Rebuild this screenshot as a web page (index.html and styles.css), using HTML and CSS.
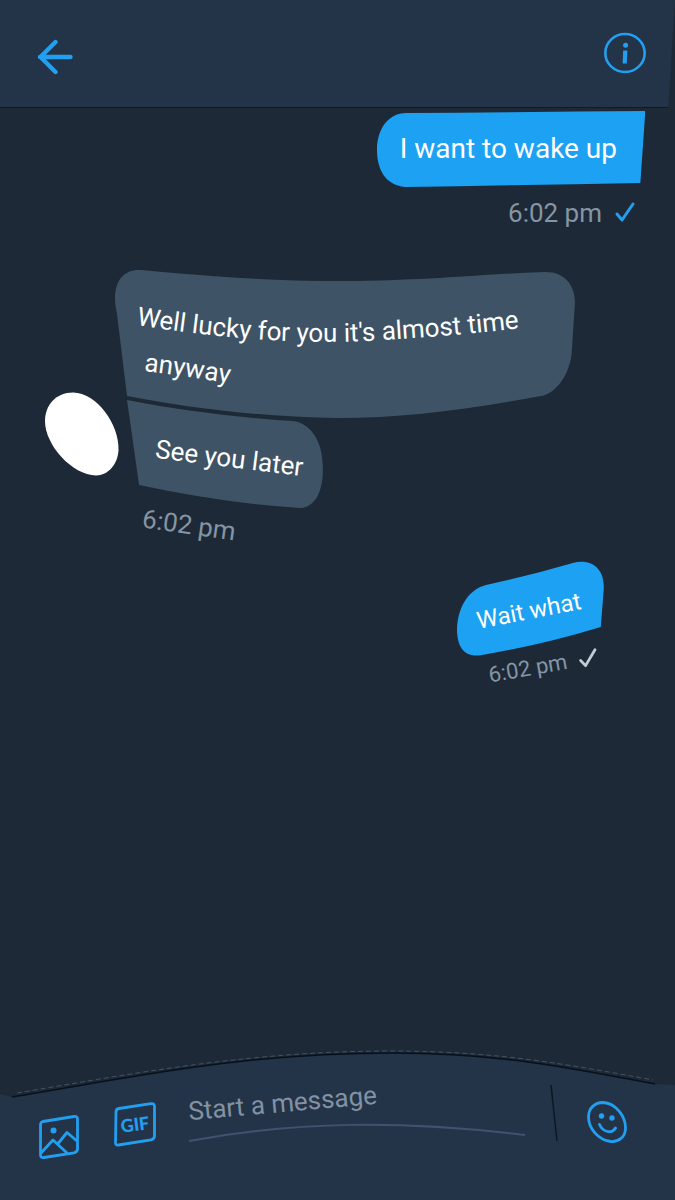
FILE: index.html
```html
<!DOCTYPE html>
<html lang="en">
<head>
<meta charset="utf-8">
<meta name="viewport" content="width=device-width, initial-scale=1">
<title>Messages</title>
<link rel="stylesheet" href="styles.css">
</head>
<body>
<header class="topbar">
  <button class="icon-button" type="button" aria-label="Back">
    <svg class="icon" width="36" height="36" viewBox="0 0 36 36"><path d="M33.500 18H3M18.500 3 3.500 18l15 15" stroke-width="4.400"/></svg>
  </button>
  <button class="icon-button" type="button" aria-label="Conversation info">
    <svg class="icon" width="42" height="42" viewBox="0 0 42 42"><ellipse cx="21" cy="21" rx="19.700" ry="19" stroke-width="2.600"/><circle class="dot" cx="21.600" cy="13.300" r="2.500"/><path d="M21.300 18.500 20.700 31.500" stroke-width="4.200" stroke-linecap="butt"/></svg>
  </button>
</header>

<main class="thread">
  <section class="sent sent-first">
    <div class="bubble bubble-wake">
      <svg class="shape blue" viewBox="0 0 268 76" preserveAspectRatio="none"><path d="M29 2Q150 1 268 0L263 72Q150 74 28 76C8 74 0 58 0 39C0 17 12 2 29 2Z"/></svg>
      <p class="text text-large">I want to wake up</p>
    </div>
    <div class="meta">
      <time class="time">6:02 pm</time>
      <svg class="check blue-line" width="24" height="24" viewBox="0 0 24 24"><path d="M4 13 9 19 20 3" stroke-width="3"/></svg>
    </div>
  </section>

  <section class="received">
    <svg class="avatar" width="74" height="84" viewBox="0 0 74 84"><path d="M28 .5C52 1 74 32 73.500 58C73 72 63 83.500 51 83.500C27 83 0 53 0 29C0 13 11 .5 28 .5Z"/></svg>
    <div class="group">
      <div class="bubble bubble-lucky">
        <svg class="shape slate" viewBox="0 0 460 149" preserveAspectRatio="none"><path d="M0 30C0 10 10 0 26 1C90 7 165 13 240 12C320 11 370 5 429 3C448 2 460 15 460 33L457 80C456 106 440 125 426 127C350 141 290 149 222 149C145 148 75 139 12 127L2 45Q0 36 0 30Z"/></svg>
        <svg class="curved" viewBox="0 0 410 100" width="410" height="100">
          <defs>
            <path id="line-one" d="M1 36C90 50 165 55 230 52C290 49 345 44 405 37"/>
            <path id="line-two" d="M9 82Q60 88 140 102"/>
          </defs>
          <text><textPath href="#line-one">Well lucky for you it's almost time</textPath></text>
          <text><textPath href="#line-two">anyway</textPath></text>
        </svg>
      </div>
      <div class="bubble bubble-later">
        <svg class="shape slate" viewBox="0 0 195 108" preserveAspectRatio="none"><path d="M0 0Q75 15 165 21C184 23 195 43 195 66C196 90 188 107 173 108Q95 103 12 85Z"/></svg>
        <p class="text text-medium">See you later</p>
      </div>
      <time class="time time-left">6:02 pm</time>
    </div>
  </section>

  <section class="sent sent-last">
    <div class="bubble bubble-what">
      <svg class="shape blue" viewBox="0 0 148 95" preserveAspectRatio="none"><path d="M29 24Q75 14 116 2C136-3 148 9 147 28L144 66Q85 84 25 94C8 97 0 87 0 68C1 44 13 28 29 24Z"/></svg>
      <p class="text text-small">Wait what</p>
    </div>
    <div class="meta meta-last">
      <time class="time time-small">6:02 pm</time>
      <svg class="check pale-line" width="20" height="24" viewBox="0 0 20 24"><path d="M2 13 6 19 18 5" stroke-width="2.800"/></svg>
    </div>
  </section>
</main>

<form class="composer">
  <svg class="backdrop" viewBox="0 0 675 150" preserveAspectRatio="none">
    <path class="panel" d="M0 44 12 47C130 28 240 3 393 3C500 3 570 18 655 34L675 35V150H0Z"/>
    <path class="edge" d="M12 47C130 28 240 3 393 3C500 3 570 18 655 34"/>
    <path class="dashes" d="M17 43C130 24 250 1 390 1C500 1 570 15 653 30"/>
  </svg>
  <button class="icon-button photo" type="button" aria-label="Add photo">
    <svg class="icon" width="40" height="44" viewBox="0 0 40 44"><path d="M4 6.500 35 1.500Q38.500 1 38.500 4V34Q38.500 37 35 37.800L5 42.500Q1.500 43 1.500 40V10Q1.500 7 4 6.500ZM2 38 14 25 28 38M19.500 28 28 17.500 38 26" stroke-width="2.800"/><circle class="dot" cx="14.500" cy="15.500" r="3"/></svg>
  </button>
  <button class="icon-button gif" type="button" aria-label="Add GIF">
    <svg class="icon" width="42" height="45" viewBox="0 0 42 45"><path d="M5 6.500 37 1.700Q40.500 1.300 40.500 4.500V34Q40.500 37 37 37.800L4.500 43Q1.500 43.500 1.500 40.500L2 10Q2 7 5 6.500Z" stroke-width="2.800"/><text class="gif-text" x="21" y="29" text-anchor="middle" transform="rotate(-7 21 23)">GIF</text></svg>
  </button>
  <div class="field">
    <input class="entry" type="text" placeholder="Start a message" aria-label="Start a message">
    <svg class="underline" viewBox="0 0 340 20" preserveAspectRatio="none"><path d="M1 18C110-2 215-3 339 12"/></svg>
  </div>
  <svg class="divider" width="8" height="56" viewBox="0 0 8 56"><path d="M1 0 7 56"/></svg>
  <button class="icon-button smile" type="button" aria-label="Add emoji">
    <svg class="icon" width="40" height="42" viewBox="0 0 40 42"><path d="M16 1.500C29 2 39 16 38.500 28C38 36 32 41 24 40.500C11 39 1.500 27 1.500 16C1.500 7 8 1.500 16 1.500ZM12.500 23.500C16 31.500 25 33 28.500 27" stroke-width="2.800"/><circle class="dot" cx="14.500" cy="15" r="2.700"/><circle class="dot" cx="25" cy="17" r="2.700"/></svg>
  </button>
</form>
</body>
</html>
```
FILE: styles.css
```css
* { box-sizing: border-box; }

body {
  margin: 0;
  min-height: 100vh;
  display: flex;
  flex-direction: column;
  background: #1d2936;
  color: #fff;
  font-family: Roboto, "Liberation Sans", sans-serif;
  overflow-x: hidden;
}

svg { display: block; flex: none; }
p { margin: 0; }

.icon-button {
  padding: 0;
  border: 0;
  background: none;
  flex: none;
  position: relative;
  cursor: pointer;
}

.icon {
  fill: none;
  stroke: #229ff0;
  stroke-linecap: round;
  stroke-linejoin: round;
}

.dot { fill: #229ff0; stroke: none; }

.topbar {
  display: flex;
  justify-content: space-between;
  align-items: flex-start;
  padding: 32px 29px 32px 37px;
  background: #243448;
  border-bottom: 1px solid #111a24;
  clip-path: polygon(0 0, 100% 0, 99% 100%, 0 100%);
}

.topbar .icon-button:first-child { margin-top: 7px; }

.thread { flex: 1; }

.sent {
  display: flex;
  flex-direction: column;
  align-items: flex-end;
}

.sent-first { padding: 3px 30px 0 0; }
.sent-last { padding: 20px 70px 0 0; }

.bubble { position: relative; }

.shape {
  position: absolute;
  inset: 0;
  width: 100%;
  height: 100%;
}

.blue { fill: #1da1f2; }
.slate { fill: #3e5366; }

.text {
  position: relative;
  white-space: nowrap;
}

.bubble-wake { padding: 20px 28px 20px 23px; }

.text-large { font-size: 28px; line-height: 36px; }
.text-medium { font-size: 26px; line-height: 32px; transform: rotate(7deg); }
.text-small { font-size: 24px; line-height: 32px; transform: rotate(-11deg); }

.meta {
  display: flex;
  align-items: center;
  gap: 11px;
  margin: 10px 8px 0 0;
}

.time {
  color: #8595a3;
  font-size: 26px;
  line-height: 32px;
}

.check {
  fill: none;
  stroke-linecap: round;
  stroke-linejoin: round;
}

.blue-line { stroke: #229ff0; }
.pale-line { stroke: #c3ccd4; }

.received {
  display: flex;
  align-items: flex-start;
  padding: 40px 100px 0 45px;
}

.avatar {
  margin: 123px -4px 0 0;
  fill: #fff;
}

.group {
  flex: 1;
  display: flex;
  flex-direction: column;
  align-items: flex-start;
}

.bubble-lucky {
  width: 100%;
  padding: 20px 0 29px 20px;
}

.curved {
  position: relative;
  fill: #fff;
  font-size: 26px;
  overflow: visible;
}

.bubble-later {
  margin: -18px 0 0 12px;
  padding: 42px 19px 34px 28px;
}

.time-left {
  margin: 1px 0 0 27px;
  transform: rotate(8deg);
}

.bubble-what { padding: 34px 23px 29px 19px; }

.meta-last {
  margin: -6px 6px 0 0;
  transform: rotate(-10deg);
}

.time-small { font-size: 22px; }

.composer {
  position: relative;
  display: flex;
  align-items: flex-start;
  padding: 35px 48px 41px 39px;
}

.backdrop {
  position: absolute;
  inset: 0;
  width: 100%;
  height: 100%;
}

.panel { fill: #243448; }
.edge { fill: none; stroke: #07111d; stroke-width: 1.500; }
.dashes { fill: none; stroke: #44525f; stroke-width: 1; stroke-dasharray: 5 3; }

.photo { margin: 30px 35px 0 0; }
.gif { margin: 17px 32px 0 0; }
.smile { margin: 16px 0 0 29px; }

.gif-text {
  fill: #229ff0;
  stroke: none;
  font: 900 18px Lato, sans-serif;
}

.field {
  position: relative;
  flex: 1;
  min-width: 0;
}

.entry {
  display: block;
  width: 100%;
  height: 36px;
  padding: 0;
  border: 0;
  outline: 0;
  background: none;
  color: #fff;
  font: 26px/34px Roboto, "Liberation Sans", sans-serif;
  transform: rotate(-5deg);
  transform-origin: 94px 18px;
}

.entry::placeholder { color: #8292a3; opacity: 1; }

.underline {
  width: 100%;
  height: 20px;
  margin-top: 2px;
  fill: none;
  stroke: #40526d;
  stroke-width: 2;
}

.divider {
  position: relative;
  margin-left: 24px;
  stroke: #0d1722;
  stroke-width: 1.500;
}
```
